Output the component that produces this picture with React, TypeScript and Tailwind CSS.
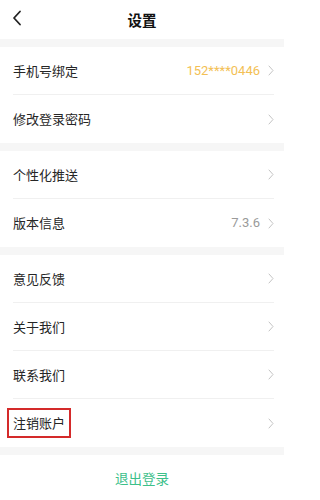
import { ReactNode } from 'react';

const font = { fontFamily: '"Noto Sans CJK SC", "Noto Sans", Roboto, sans-serif' };

function Chevron() {
  return (
    <svg width="6" height="11" viewBox="0 0 6 11" fill="none" className="shrink-0">
      <path d="M1 1l4 4.5L1 10" stroke="#c4c4c4" strokeWidth="1" strokeLinecap="round" strokeLinejoin="round" />
    </svg>
  );
}

interface RowProps {
  label: ReactNode;
  value?: string;
  valueClass?: string;
  last?: boolean;
}

function Row({ label, value, valueClass = 'text-[#9a9a9a]', last }: RowProps) {
  return (
    <div className="pl-[13px] pr-[10px]">
      <div className={`flex h-[48px] items-center justify-between ${last ? '' : 'border-b border-[#f0f0f0]'}`}>
        <div className="text-[13px] text-[#262626]">{label}</div>
        <div className="flex items-center gap-[8px]">
          {value && (
            <span className={`font-['Roboto',sans-serif] text-[13px] ${valueClass}`}>{value}</span>
          )}
          <Chevron />
        </div>
      </div>
    </div>
  );
}

function Gap() {
  return <div className="h-[8px] bg-[#f6f6f6]" />;
}

export default function App() {
  return (
    <div className="w-[284px] h-[500px] bg-white overflow-hidden" style={font}>
      {/* header */}
      <div className="relative flex h-[39px] items-center justify-center">
        <svg width="10" height="16" viewBox="0 0 10 16" fill="none" className="absolute left-[12px] top-[10px]">
          <path d="M8 1.5L2 8l6 6.5" stroke="#222" strokeWidth="1.8" strokeLinecap="round" strokeLinejoin="round" />
        </svg>
        <span className="text-[14.5px] font-semibold text-[#111]">设置</span>
      </div>
      <Gap />
      <Row label="手机号绑定" value="152****0446" valueClass="text-[#f3bf55]" />
      <Row label="修改登录密码" last />
      <Gap />
      <Row label="个性化推送" />
      <Row label="版本信息" value="7.3.6" last />
      <Gap />
      <Row label="意见反馈" />
      <Row label="关于我们" />
      <Row label="联系我们" />
      <Row
        label={
          <span className="-ml-[6px] inline-block border-2 border-[#d42a2a] px-[4px] py-[4px] leading-[18px]">注销账户</span>
        }
        last
      />
      <Gap />
      <div className="flex h-[46px] items-center justify-center">
        <span className="text-[13.5px] text-[#3cc08a]">退出登录</span>
      </div>
    </div>
  );
}
